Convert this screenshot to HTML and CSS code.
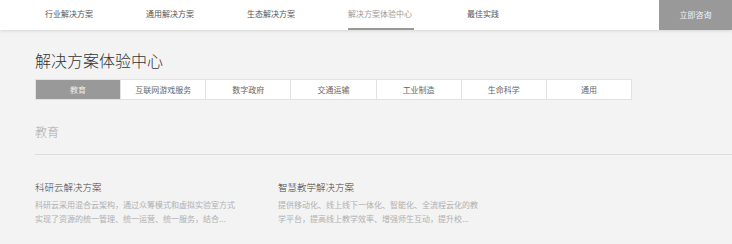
FILE: index.html
```html
<!DOCTYPE html>
<html lang="zh-CN">
<head>
    <meta charset="UTF-8">
    <meta name="viewport" content="width=device-width, initial-scale=1.0">
    <title>解决方案体验中心</title>
    <link rel="stylesheet" href="styles.css">
</head>
<body>
    <!-- 顶部导航 -->
    <header class="topbar">
        <nav class="topnav">
            <a href="#">行业解决方案</a>
            <a href="#">通用解决方案</a>
            <a href="#">生态解决方案</a>
            <a href="#" class="active">解决方案体验中心</a>
            <a href="#">最佳实践</a>
        </nav>
        <a href="#" class="consult">立即咨询</a>
    </header>

    <!-- 页面内容 -->
    <div class="container">
        <h1 class="page-title">解决方案体验中心</h1>

        <div class="tabs">
            <a href="#" class="tab active">教育</a>
            <a href="#" class="tab">互联网游戏服务</a>
            <a href="#" class="tab">数字政府</a>
            <a href="#" class="tab">交通运输</a>
            <a href="#" class="tab">工业制造</a>
            <a href="#" class="tab">生命科学</a>
            <a href="#" class="tab">通用</a>
        </div>

        <h2 class="section-title">教育</h2>

        <div class="cards">
            <div class="card">
                <h3>科研云解决方案</h3>
                <p>科研云采用混合云架构，通过众筹模式和虚拟实验室方式实现了资源的统一管理、统一运营、统一服务，结合...</p>
            </div>
            <div class="card">
                <h3>智慧教学解决方案</h3>
                <p>提供移动化、线上线下一体化、智能化、全流程云化的教学平台，提高线上教学效率、增强师生互动，提升校...</p>
            </div>
        </div>
    </div>
</body>
</html>
```

FILE: styles.css
```css
/* 页面整体 */
body {
    margin: 0;
    font-family: "Noto Sans CJK SC", "Liberation Sans", sans-serif;
    background-color: #f3f3f3;
    color: #333;
    overflow: hidden;
}

a {
    text-decoration: none;
}

/* 顶部导航 */
.topbar {
    height: 30px;
    background-color: #fff;
    display: flex;
    justify-content: space-between;
    box-shadow: 0 1px 3px rgba(0, 0, 0, 0.12);
}

.topnav {
    display: flex;
    gap: 53px;
    margin-left: 45px;
}

.topnav a {
    font-size: 8px;
    line-height: 28px;
    color: #555;
    border-bottom: 2px solid transparent;
}

.topnav a.active {
    color: #999;
    border-bottom-color: #999;
    padding-right: 2px;
}

.consult {
    width: 73px;
    background-color: #999;
    color: #f4f4f4;
    font-size: 8px;
    line-height: 30px;
    text-align: center;
}

/* 内容区 */
.container {
    padding: 0 0 0 35px;
}

.page-title {
    font-size: 16px;
    font-weight: 300;
    line-height: 22px;
    margin: 19px 0 8px;
    color: #333;
}

/* 分类标签 */
.tabs {
    display: flex;
    width: 597px;
    background-color: #fff;
    border: 1px solid #e2e2e2;
    box-sizing: border-box;
}

.tab {
    flex: 1;
    font-size: 8px;
    line-height: 19px;
    text-align: center;
    color: #666;
    border-left: 1px solid #e2e2e2;
}

.tab:first-child {
    border-left: none;
}

.tab.active {
    background-color: #999;
    color: #eee;
}

.section-title {
    font-size: 12px;
    font-weight: 300;
    color: #aaa;
    line-height: 16px;
    margin: 24px 0 0;
    padding-bottom: 14px;
    border-bottom: 1px solid #ddd;
}

/* 方案卡片 */
.cards {
    display: flex;
    gap: 41px;
    margin-top: 25px;
}

.card {
    width: 202px;
}

.card h3 {
    font-size: 9.5px;
    font-weight: 300;
    line-height: 14px;
    margin: 0 0 4px;
    color: #444;
}

.card p {
    font-size: 8px;
    line-height: 14px;
    margin: 0;
    color: #b0b0b0;
}
```
